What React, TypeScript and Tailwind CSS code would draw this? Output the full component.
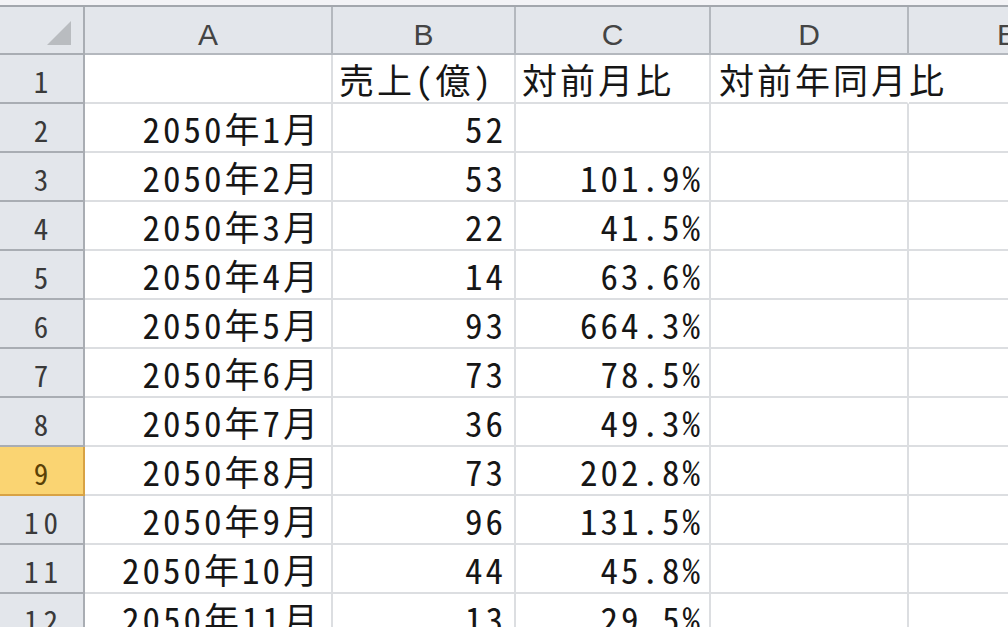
import React from "react";

// rows of the sheet: [A, B, C, D]
const rows: string[][] = [
  ["", "売上(億)", "対前月比", "対前年同月比"],
  ["2050年1月", "52", "", ""],
  ["2050年2月", "53", "101.9%", ""],
  ["2050年3月", "22", "41.5%", ""],
  ["2050年4月", "14", "63.6%", ""],
  ["2050年5月", "93", "664.3%", ""],
  ["2050年6月", "73", "78.5%", ""],
  ["2050年7月", "36", "49.3%", ""],
  ["2050年8月", "73", "202.8%", ""],
  ["2050年9月", "96", "131.5%", ""],
  ["2050年10月", "44", "45.8%", ""],
  ["2050年11月", "13", "29.5%", ""],
];

const cols = ["A", "B", "C", "D", "E"];

const cellFont =
  "[font-family:'Noto_Sans_Mono_CJK_JP','Noto_Sans_CJK_JP',monospace] font-light text-[35px] tracking-[3px] text-[#161616]";

const rowHead =
  "h-[49px] border-r-2 border-b-2 flex items-center justify-center pt-[4px] pl-[4px] [font-family:'Noto_Sans_Mono_CJK_JP','Noto_Sans_CJK_JP',monospace] font-light text-[29px] tracking-[5px]";

export default function App() {
  return (
    <div className="w-[1008px] h-[627px] overflow-hidden bg-white">
      <div className="h-[7px] bg-[#f3f3f6] border-b-2 border-[#a3a7ad]" />
      <div className="grid grid-cols-[85px_248px_183px_195px_198px_198px]">
        {/* column headers */}
        <div className="h-[48px] bg-[#e3e6eb] border-r-2 border-b-2 border-[#a9adb3] flex items-end justify-end pr-[12px] pb-[8px]">
          <svg width="24" height="24" viewBox="0 0 24 24">
            <polygon points="24,0 24,24 0,24" fill="#b9bcc0" />
          </svg>
        </div>
        {cols.map((c) => (
          <div
            key={c}
            className="h-[48px] bg-[#e3e6eb] border-r-2 border-b-2 border-[#b4b8be] flex items-center justify-center pt-[8px] [font-family:'Liberation_Sans',Arial,sans-serif] text-[30px] text-[#444]"
          >
            {c}
          </div>
        ))}

        {rows.map((r, i) => {
          const n = i + 1;
          const selected = n === 9;
          return (
            <React.Fragment key={n}>
              <div
                className={
                  selected
                    ? `${rowHead} bg-[#fad472] border-[#d8a244] text-[#5b4106]`
                    : `${rowHead} bg-[#e3e6eb] border-[#a9adb3] text-[#3a3a3a]`
                }
              >
                {n}
              </div>
              <div className={`h-[49px] border-r-2 border-b-2 border-[#dcdee1] flex items-center justify-end pr-[10px] pt-[2px] whitespace-nowrap ${cellFont}`}>
                {r[0]}
              </div>
              {n === 1 ? (
                <>
                  <div className={`h-[49px] border-r-2 border-b-2 border-[#dcdee1] flex items-center pl-[6px] pt-[2px] whitespace-nowrap ${cellFont}`}>
                    {r[1]}
                  </div>
                  <div className={`h-[49px] border-r-2 border-b-2 border-[#dcdee1] flex items-center pl-[6px] pt-[2px] whitespace-nowrap ${cellFont}`}>
                    {r[2]}
                  </div>
                  <div className={`h-[49px] border-b-2 border-r-2 border-r-transparent border-b-[#dcdee1] flex items-center pl-[8px] pt-[2px] whitespace-nowrap overflow-visible ${cellFont}`}>
                    {r[3]}
                  </div>
                </>
              ) : (
                <>
                  <div className={`h-[49px] border-r-2 border-b-2 border-[#dcdee1] flex items-center justify-end pr-[8px] pt-[2px] whitespace-nowrap ${cellFont}`}>
                    {r[1]}
                  </div>
                  <div className={`h-[49px] border-r-2 border-b-2 border-[#dcdee1] flex items-center justify-end pr-[6px] pt-[2px] whitespace-nowrap ${cellFont}`}>
                    {r[2]}
                  </div>
                  <div className={`h-[49px] border-r-2 border-b-2 border-[#dcdee1] ${cellFont}`}>
                    {r[3]}
                  </div>
                </>
              )}
              <div className="h-[49px] border-b-2 border-[#dcdee1]" />
            </React.Fragment>
          );
        })}
      </div>
    </div>
  );
}
